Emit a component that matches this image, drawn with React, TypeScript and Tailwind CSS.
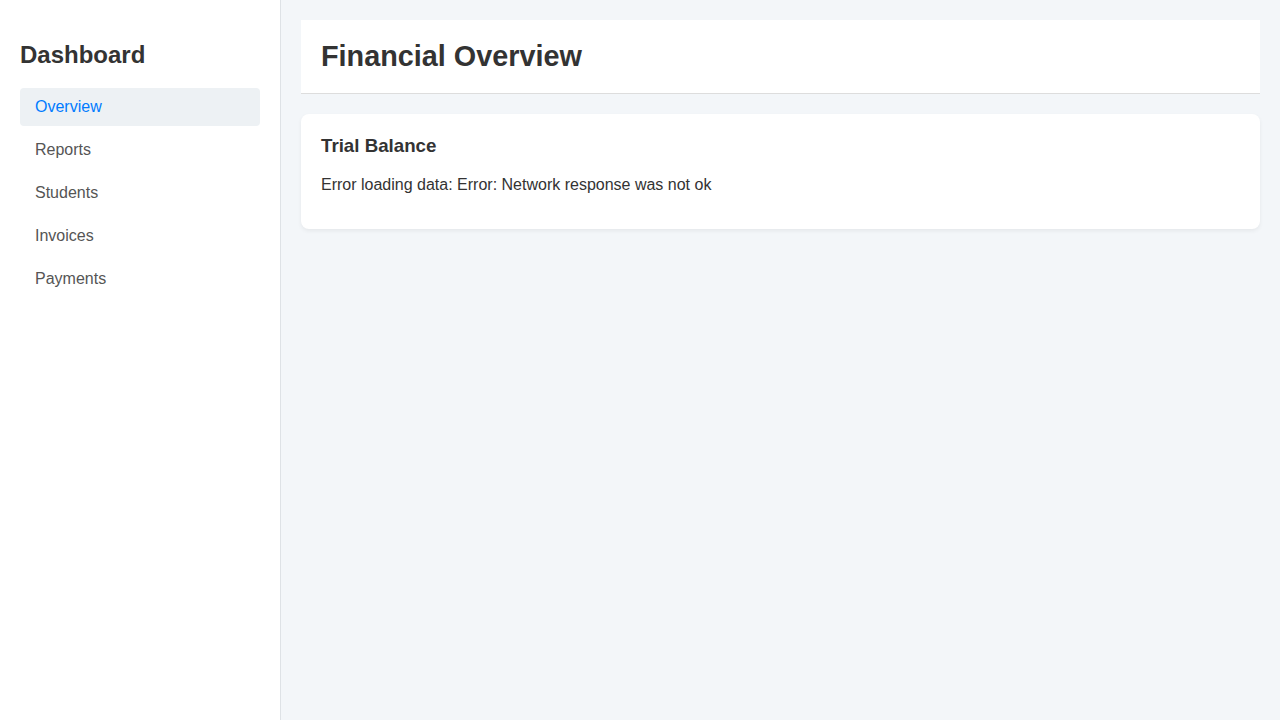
const navItems = ["Overview", "Reports", "Students", "Invoices", "Payments"];

const Sidebar = () => {
    return (
        <aside className="w-[281px] shrink-0 bg-white border-r border-[#dee2e6] p-5">
            <h2 className="mt-5 mb-[18px] text-[24px] leading-[30px] font-bold text-[#333]">Dashboard</h2>
            <nav className="flex flex-col">
                {navItems.map((item, i) => (
                    <a
                        key={item}
                        className={
                            i === 0
                                ? "mb-[5px] rounded px-[15px] py-[10px] text-[16px] leading-[18px] text-[#007bff] bg-[#edf1f4]"
                                : "mb-[5px] rounded px-[15px] py-[10px] text-[16px] leading-[18px] text-[#555]"
                        }
                    >
                        {item}
                    </a>
                ))}
            </nav>
        </aside>
    );
};

export default function App() {
    return (
        <div className="flex min-h-[720px] font-['Liberation_Sans',Arial,sans-serif]">
            <Sidebar />
            <main className="flex-1 bg-[#f3f6f9] p-5">
                <header className="bg-white border-b border-[#dddddd] px-5 py-5 mb-5">
                    <h1 className="text-[28.8px] leading-[33px] font-bold text-[#333]">Financial Overview</h1>
                </header>
                <section className="bg-white rounded-lg shadow-[0_2px_4px_rgba(0,0,0,0.06)] px-5 pt-[21px] pb-[19px]">
                    <h3 className="text-[18.72px] leading-[22px] font-bold text-[#333] mb-[19px]">Trial Balance</h3>
                    <p className="text-[16px] leading-[18px] text-[#333] mb-4">Error loading data: Error: Network response was not ok</p>
                </section>
            </main>
        </div>
    );
}
